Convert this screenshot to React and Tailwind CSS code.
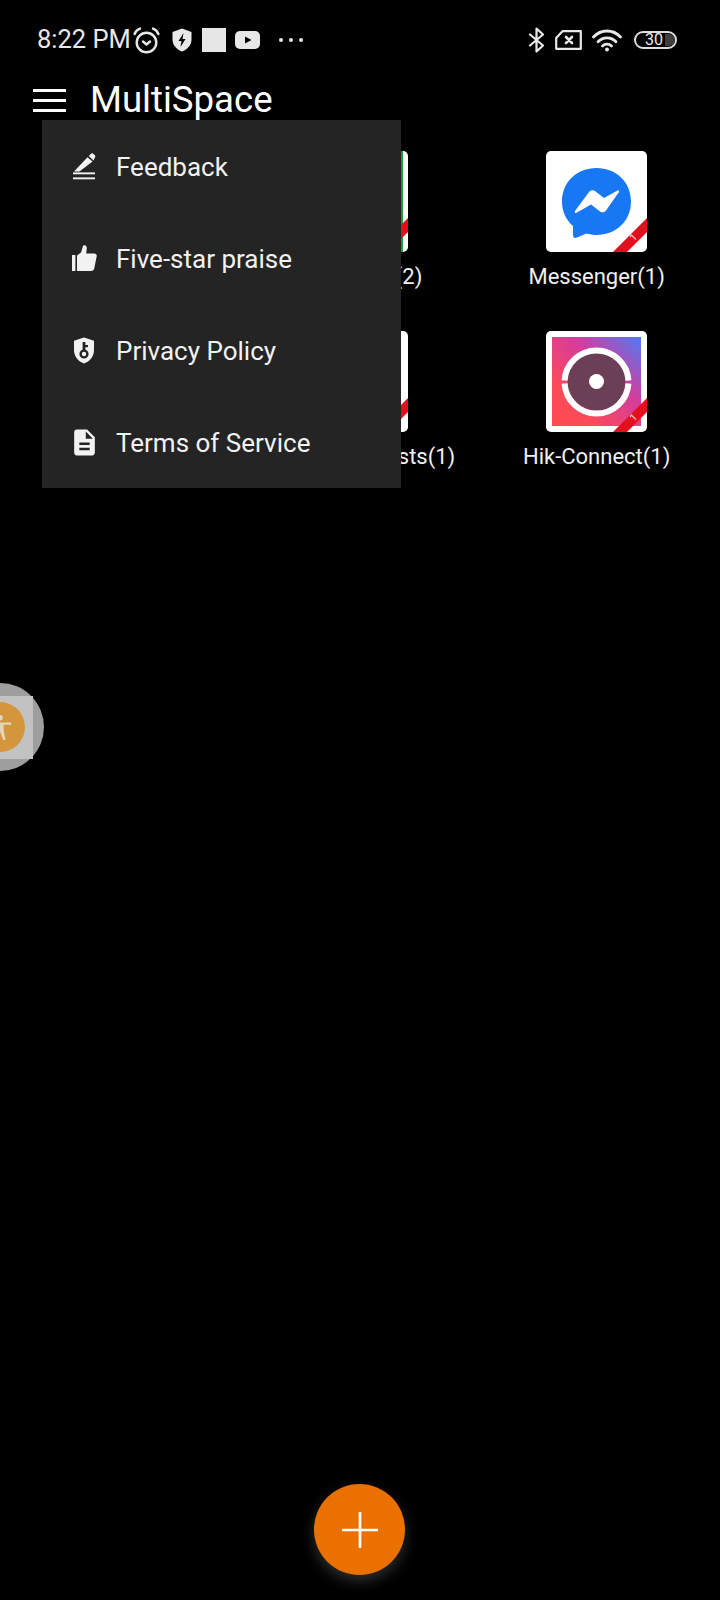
import React from "react";
import { MdDescription } from "react-icons/md";

const font = "font-['Roboto',sans-serif]";

const AlarmIcon = () => (
  <svg width="27" height="27" viewBox="0 0 27 27" fill="none" stroke="#e8e8e8" strokeWidth="2.4" strokeLinecap="round" strokeLinejoin="round">
    <circle cx="13.5" cy="15.5" r="9.8" />
    <path d="M10 14.5l3.5 3 3.5-3" />
    <path d="M1.6 7C2.6 4.2 4.6 2.4 7 1.6M25.4 7C24.4 4.2 22.4 2.4 20 1.6" />
  </svg>
);

const BoltShield = () => (
  <svg width="20" height="24" viewBox="0 0 20 24">
    <path d="M10 0.5L19.5 4V11.5C19.5 17 15.5 21.5 10 23.5C4.5 21.5 0.5 17 0.5 11.5V4Z" fill="#e8e8e8" />
    <path d="M11.5 5L6.5 13H9.5L8.5 19L13.5 11H10.5Z" fill="#000" />
  </svg>
);

const YoutubeIcon = () => (
  <svg width="25" height="18" viewBox="0 0 25 18">
    <rect width="25" height="18" rx="5" fill="#e8e8e8" />
    <path d="M10 5.5L16.5 9L10 12.5Z" fill="#000" />
  </svg>
);

const BluetoothIcon = () => (
  <svg width="17" height="26" viewBox="0 0 17 26" fill="none" stroke="#e8e8e8" strokeWidth="2.2" strokeLinecap="round" strokeLinejoin="round">
    <path d="M2 7.5L15 18.5L8.5 24.5V1.5L15 7.5L2 18.5" />
  </svg>
);

const SimIcon = () => (
  <svg width="27" height="20" viewBox="0 0 27 20" fill="none" stroke="#e8e8e8" strokeWidth="2.2" strokeLinejoin="round" strokeLinecap="round">
    <path d="M7.5 1.2H25.8V18.8H1.2V8Z" />
    <path d="M11 7L17 13M17 7L11 13" strokeWidth="2.6" />
  </svg>
);

const WifiIcon = () => (
  <svg width="30" height="23" viewBox="0 0 30 23" fill="none" stroke="#e8e8e8" strokeWidth="2.8" strokeLinecap="round">
    <path d="M1.5 8C9 0 21 0 28.5 8" />
    <path d="M6 12.8C11 7.5 19 7.5 24 12.8" />
    <path d="M10.5 17C13 14.5 17 14.5 19.5 17" />
    <circle cx="15" cy="20.5" r="2" fill="#e8e8e8" stroke="none" />
  </svg>
);

const Battery = () => (
  <div className="relative flex h-[18px] w-[43px] items-center overflow-hidden rounded-full border-2 border-[#dedede] pl-[9px]">
    <span className="text-[16px] leading-none text-[#e8e8e8]">30</span>
    <div className="ml-[2px] h-[12px] w-[10px] rounded-r-full bg-[#3f3f3f]" />
  </div>
);

const PencilIcon = () => (
  <svg width="24" height="27" viewBox="0 0 24 27" fill="#f2f2f2">
    <path d="M2 18.5L15.5 4.2L20.5 8.6L7.5 18.5Z" />
    <path d="M16.8 3L18.8 0.9C19.5 0.2 20.5 0.2 21.2 0.8L22.8 2.2C23.5 2.9 23.5 3.8 22.9 4.5L21.5 7.4Z" />
    <rect x="1" y="19.4" width="22" height="1.9" />
    <rect x="1" y="24.4" width="22" height="1.9" />
  </svg>
);

const ThumbIcon = () => (
  <svg width="25" height="26" viewBox="0 0 25 26" fill="#f2f2f2">
    <rect x="0" y="10" width="3.4" height="16" />
    <path d="M5 10.5L9 7.5L11 1C11.2 0.2 14.5 -0.5 14.8 3L14.2 8.5H22.4C24 8.5 25 9.8 24.7 11.3L22.2 23.6C21.9 25 20.8 26 19.4 26H5Z" />
  </svg>
);

const KeyShield = () => (
  <svg width="22" height="27" viewBox="0 0 22 27">
    <path d="M11 0.5L21 3.8V13C21 19.2 17 24.4 11 26.5C5 24.4 1 19.2 1 13V3.8Z" fill="#f2f2f2" />
    <rect x="9.6" y="5" width="2.8" height="9" fill="#242424" />
    <rect x="12" y="8" width="3" height="2.2" fill="#242424" />
    <circle cx="11" cy="17" r="3.4" fill="none" stroke="#242424" strokeWidth="2.4" />
  </svg>
);

const Ribbon = () => (
  <svg className="absolute inset-0" width="101" height="101" viewBox="0 0 101 101">
    <polygon points="101,67 101,81 81,101 67,101" fill="#e0101f" />
    <text x="87" y="90" fontSize="10" fill="#ffffff" textAnchor="middle" fontFamily="Roboto" transform="rotate(-45 87 86)">1</text>
  </svg>
);

const MessengerArt = () => (
  <svg className="absolute inset-0" width="101" height="101" viewBox="0 0 101 101">
    <path d="M50.5 17C31 17 16 31 16 50.5C16 60.5 20 69 27 75L27 84C27 86.5 29 87.5 31 86.5L40.5 82.5C43.5 83.3 47 84 50.5 84C70 84 85 70 85 50.5C85 31 70 17 50.5 17Z" fill="#1877f2" />
    <path d="M29 60L43 41C44.5 39 47 38.5 49 40L58 47L71.5 39.5C72.5 39 73.5 40 73 41L60 59.5C58.5 61.5 56 62 54 60.5L45 53.5L31 61.5C29.5 62.5 28 61.5 29 60Z" fill="#fff" />
  </svg>
);

const HikArt = () => (
  <svg className="absolute inset-0" width="101" height="101" viewBox="0 0 101 101">
    <defs>
      <linearGradient id="hikBg" x1="1" y1="0" x2="0" y2="1">
        <stop offset="0" stopColor="#4f7bf5" />
        <stop offset="0.38" stopColor="#d43c9e" />
        <stop offset="0.75" stopColor="#fb4a5a" />
        <stop offset="1" stopColor="#ff4b50" />
      </linearGradient>
    </defs>
    <rect x="6" y="6" width="89" height="89" fill="url(#hikBg)" />
    <circle cx="50.5" cy="50.5" r="29" fill="#6b4056" />
    <path d="M18.56 49.5A32 32 0 0 1 82.44 49.5M82.44 52.5A32 32 0 0 1 18.56 52.5" fill="none" stroke="#fff" strokeWidth="6" />
    <circle cx="50.5" cy="50.5" r="7.5" fill="#fff" />
  </svg>
);

const GreenArt = () => (
  <div className="absolute inset-y-0 left-[94px] w-[2px] bg-[#1d9a3c]" />
);

function AppTile({ label, children }) {
  return (
    <div className="flex flex-col items-center">
      <div className="relative h-[101px] w-[101px] overflow-hidden rounded-[5px] bg-white">
        {children}
        <Ribbon />
      </div>
      <span className="mt-[12px] whitespace-nowrap text-[22px] leading-[26px] text-[#f0f0f0]">{label}</span>
    </div>
  );
}

const menuItems = [
  { label: "Feedback", icon: <PencilIcon /> },
  { label: "Five-star praise", icon: <ThumbIcon /> },
  { label: "Privacy Policy", icon: <KeyShield /> },
  { label: "Terms of Service", icon: <MdDescription size={31} color="#f2f2f2" /> },
];

export default function App() {
  return (
    <div className={`relative h-[1600px] w-[720px] overflow-hidden bg-black text-white ${font}`}>
      {/* status bar */}
      <div className="flex h-[80px] items-center justify-between pl-[37px] pr-[43px]">
        <div className="flex items-center">
          <span className="text-[25.5px] leading-none text-[#e8e8e8]">8:22 PM</span>
          <div className="ml-[2px]"><AlarmIcon /></div>
          <div className="ml-[12px]"><BoltShield /></div>
          <div className="ml-[10px] h-[24px] w-[24px] bg-[#e6e6e6]" />
          <div className="ml-[9px]"><YoutubeIcon /></div>
          <div className="ml-[19px] flex gap-[6px]">
            <div className="h-[4px] w-[4px] rounded-full bg-[#e8e8e8]" />
            <div className="h-[4px] w-[4px] rounded-full bg-[#e8e8e8]" />
            <div className="h-[4px] w-[4px] rounded-full bg-[#e8e8e8]" />
          </div>
        </div>
        <div className="flex items-center">
          <BluetoothIcon />
          <div className="ml-[10px]"><SimIcon /></div>
          <div className="ml-[10px]"><WifiIcon /></div>
          <div className="ml-[12px]"><Battery /></div>
        </div>
      </div>

      {/* header */}
      <div className="flex h-[40px] items-center pl-[33px]">
        <div className="flex w-[33px] flex-col gap-[7px]">
          <div className="h-[3px] bg-white" />
          <div className="h-[3px] bg-white" />
          <div className="h-[3px] bg-white" />
        </div>
        <h1 className="ml-[24px] text-[36.6px] font-normal leading-none">MultiSpace</h1>
      </div>

      {/* app grid, first column sits fully under the menu */}
      <div className="mt-[31px] grid grid-cols-3 gap-y-[41px] pr-[4px]">
        <div />
        <AppTile label="WhatsApp(2)"><GreenArt /></AppTile>
        <AppTile label="Messenger(1)"><MessengerArt /></AppTile>
        <div />
        <AppTile label="Google Podcasts(1)" />
        <AppTile label="Hik-Connect(1)"><HikArt /></AppTile>
      </div>

      {/* overflow menu */}
      <div className="absolute left-[42px] top-[120px] w-[359px] bg-[#242424]">
        {menuItems.map((item) => (
          <div key={item.label} className="flex h-[92px] items-center">
            <div className="ml-[22px] flex w-[40px] justify-center">{item.icon}</div>
            <span className="ml-[12px] pt-[2px] text-[26px] leading-none text-[#f2f2f2]">{item.label}</span>
          </div>
        ))}
      </div>

      {/* floating bubble on the screen edge */}
      <div className="absolute left-[-44px] top-[683px] flex h-[88px] w-[88px] items-center justify-center rounded-full bg-[#9e9e9e]">
        <div className="flex h-[63px] w-[66px] items-center justify-center bg-[#c2c2c2]">
          <div className="flex h-[50px] w-[50px] items-center justify-center rounded-full bg-[#d4963c]">
            <svg width="24" height="28" viewBox="0 0 26 30" fill="#e4d4bc">
              <circle cx="13" cy="5" r="3" />
              <path d="M1 10H25V12.5H17V19L19 29H16.5L13 20L9.5 29H7L9 19V12.5H1Z" />
            </svg>
          </div>
        </div>
      </div>

      {/* add button */}
      <div className="absolute bottom-[25px] left-[314px] flex h-[91px] w-[91px] items-center justify-center rounded-full bg-[#ea7000] shadow-[0_6px_14px_rgba(255,255,255,0.18)]">
        <svg width="36" height="36" viewBox="0 0 36 36" stroke="#fff" strokeWidth="2.7" strokeLinecap="round">
          <path d="M18 1V35M1 18H35" />
        </svg>
      </div>
    </div>
  );
}
